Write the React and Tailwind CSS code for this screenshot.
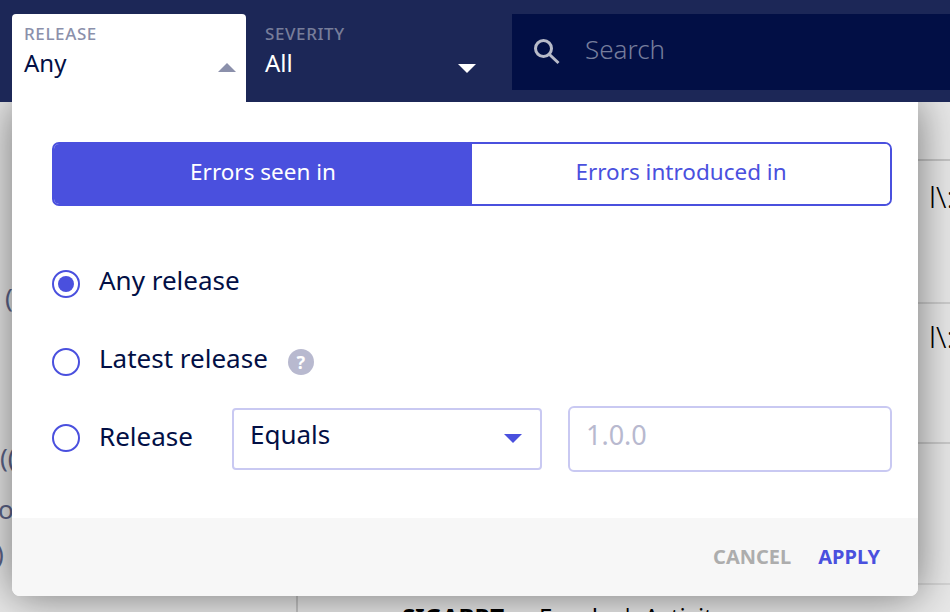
const Triangle = ({ up, className }) => (
  <svg width="18" height="9" viewBox="0 0 18 9" className={className}>
    <path d={up ? "M9 0L18 9H0Z" : "M0 0H18L9 9Z"} fill="currentColor" />
  </svg>
);

const Radio = ({ checked, className = "" }) => (
  <span className={`flex h-[28px] w-[28px] shrink-0 items-center justify-center rounded-full border-2 border-[#4a50de] bg-white ${className}`}>
    {checked && <span className="h-[16px] w-[16px] rounded-full bg-[#4a50de]" />}
  </span>
);

export default function App() {
  return (
    <div className="relative h-[612px] w-[950px] overflow-hidden bg-[#e8e8e8] font-['Noto_Sans',sans-serif]">
      <header className="relative z-10 flex h-[102px] items-start bg-[#1c2757] pl-[12px]">
        <div className="mt-[14px] h-[88px] w-[234px] rounded-t-[4px] bg-white pl-[12px] pr-[10px] pt-[10px]">
          <div className="text-[17px] font-medium leading-[20px] tracking-[0.6px] text-[#8b90ab]">RELEASE</div>
          <div className="mt-[4px] flex items-center justify-between">
            <span className="text-[24px] leading-[30px] text-[#020f45]">Any</span>
            <Triangle up className="mt-[8px] text-[#8b90ab]" />
          </div>
        </div>
        <div className="mt-[14px] h-[88px] w-[266px] pl-[19px] pr-[36px] pt-[10px]">
          <div className="text-[17px] font-medium leading-[20px] tracking-[0.6px] text-[#777d9a]">SEVERITY</div>
          <div className="mt-[4px] flex items-center justify-between">
            <span className="text-[24px] leading-[30px] text-white">All</span>
            <Triangle className="mt-[10px] text-white" />
          </div>
        </div>
        <div className="mt-[14px] flex h-[76px] flex-1 items-center bg-[#020f45] pl-[20px]">
          <svg width="30" height="30" viewBox="0 0 30 30" fill="none" stroke="#b8bbc9" strokeWidth="3" className="shrink-0">
            <circle cx="11.5" cy="11.5" r="8" />
            <path d="M17 17L26.5 26" />
          </svg>
          <span className="mb-[6px] ml-[23px] text-[26px] font-light text-[#767d9c]">Search</span>
        </div>
      </header>

      {/* page behind the popover */}
      <div className="flex h-[510px]">
        <div className="relative w-[298px] shrink-0 border-r-2 border-[#c4c4c4] text-[#5c6488]">
          <span className="absolute left-[5px] top-[176px] text-[26px]">(</span>
          <span className="absolute left-[0px] top-[336px] text-[26px]">((</span>
          <span className="absolute left-[-2px] top-[388px] text-[26px]">o</span>
          <span className="absolute left-[-4px] top-[432px] text-[26px]">)</span>
        </div>
        <div className="flex-1">
          <div className="h-[59px] border-b-2 border-[#c4c4c4]" />
        </div>
      </div>
      <div className="absolute left-[929px] top-[179px] text-[30px] font-light leading-[36px] text-black">l\:</div>
      <div className="absolute left-[929px] top-[319px] text-[30px] font-light leading-[36px] text-black">l\:</div>
      <div className="absolute left-[918px] right-0 top-[302px] h-[2px] bg-[#cdcdcd]" />
      <div className="absolute left-[918px] right-0 top-[442px] h-[2px] bg-[#cacaca]" />
      <div className="absolute left-[918px] right-0 top-[583px] h-[2px] bg-[#d4d4d4]" />
      <div className="absolute left-[402px] top-[601px] flex whitespace-nowrap text-[24px] leading-[32px] text-black">
        <b className="w-[137px]">SIGABRT</b>
        <span className="w-[82px]">Fmrd</span>
        <span className="w-[23px]">|</span>
        <span>Activity</span>
      </div>

      {/* release popover */}
      <div className="absolute left-[12px] top-[102px] flex h-[494px] w-[906px] flex-col overflow-hidden rounded-b-[8px] bg-white shadow-[0_0_44px_rgba(0,0,0,0.5)]">
        <div className="flex-1 pl-[40px] pr-[26px] pt-[40px]">
          <div className="flex h-[64px] overflow-hidden rounded-[7px] border-2 border-[#4a50de] text-[22.5px]">
            <div className="flex w-[418px] items-center justify-center bg-[#4a50de] pb-[5px] text-white">Errors seen in</div>
            <div className="flex flex-1 items-center justify-center bg-white pb-[5px] text-[#4a50de]">Errors introduced in</div>
          </div>
          <div className="mt-[60px] flex h-[36px] items-center text-[26px] text-[#020f45]">
            <Radio checked />
            <span className="-mt-[8px] ml-[19px]">Any release</span>
          </div>
          <div className="mt-[42px] flex h-[36px] items-center text-[26px] text-[#020f45]">
            <Radio />
            <span className="-mt-[8px] ml-[19px]">Latest release</span>
            <span className="ml-[20px] flex h-[26px] w-[26px] items-center justify-center rounded-full bg-[#b8b9cf] text-[18px] font-bold text-white">?</span>
          </div>
          <div className="mt-[26px] flex h-[66px] items-center text-[26px] text-[#020f45]">
            <Radio className="-mt-[2px]" />
            <span className="-mt-[6px] ml-[19px] w-[133px]">Release</span>
            <div className="flex h-[62px] w-[310px] items-center justify-between rounded-[4px] border-2 border-[#c9c9f2] pl-[16px] pr-[18px]">
              <span className="-mt-[10px]">Equals</span>
              <Triangle className="-mt-[2px] text-[#4a50de]" />
            </div>
            <div className="ml-[26px] flex h-[66px] w-[324px] items-center rounded-[6px] border-2 border-[#c9c9f2] pl-[16px] text-[27px] text-[#b8b9cf]">
              <span className="-mt-[8px]">1.0.0</span>
            </div>
          </div>
        </div>
        <div className="flex h-[78px] items-center justify-end gap-[27px] bg-[#f7f7f7] pr-[38px] text-[20px] font-bold">
          <span className="text-[#adadad]">CANCEL</span>
          <span className="text-[#4a50de]">APPLY</span>
        </div>
      </div>
    </div>
  );
}
